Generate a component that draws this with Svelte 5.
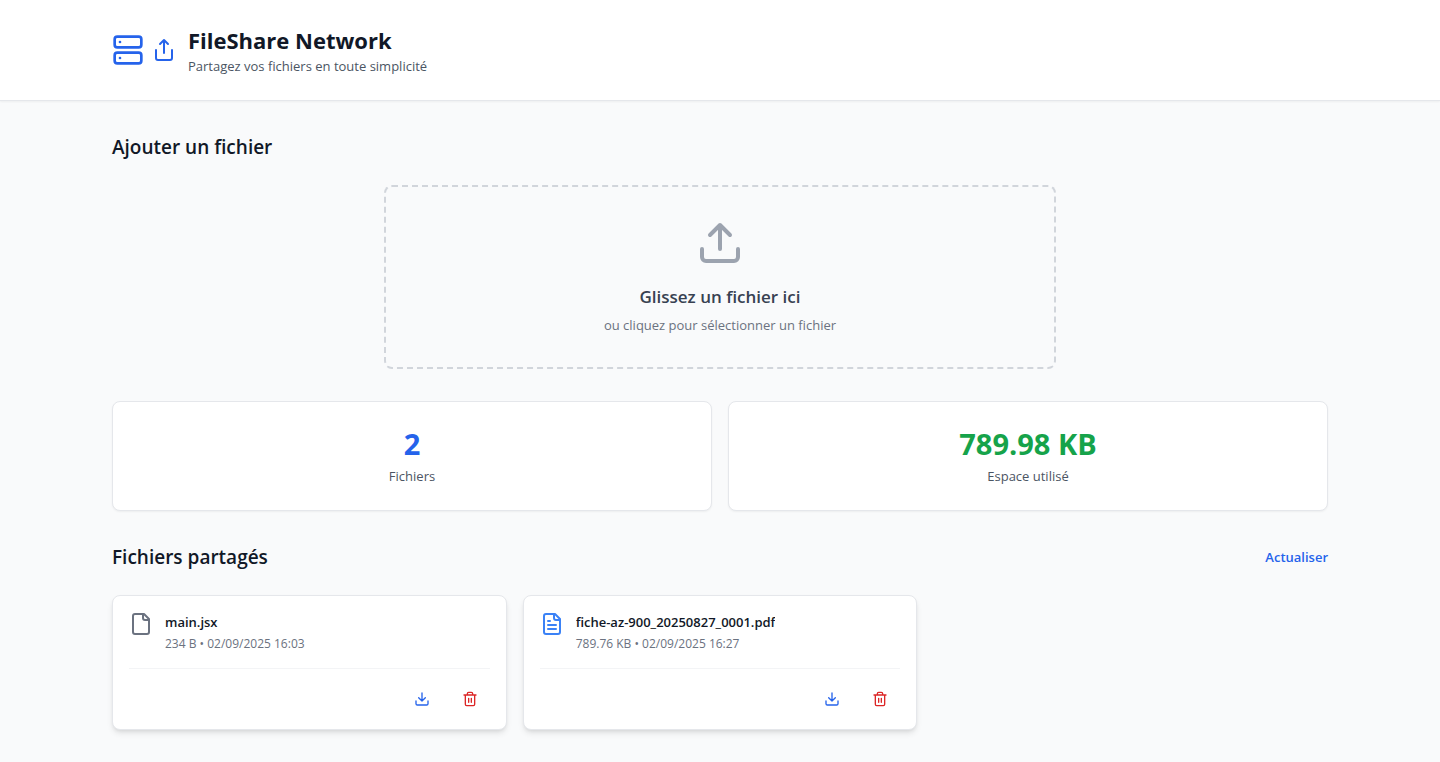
<script>
  const files = [
    { name: 'main.jsx', size: '234 B', date: '02/09/2025 16:03', kind: 'file' },
    { name: 'fiche-az-900_20250827_0001.pdf', size: '789.76 KB', date: '02/09/2025 16:27', kind: 'pdf' }
  ];
</script>

<div class="page">
  <header>
    <div class="container brand">
      <div class="logo">
        <svg class="icon server" viewBox="0 0 24 24" aria-hidden="true">
          <rect x="2" y="2" width="20" height="8" rx="2" />
          <rect x="2" y="14" width="20" height="8" rx="2" />
          <path d="M6 6h.01M6 18h.01" />
        </svg>
        <svg class="icon share" viewBox="0 0 24 24" aria-hidden="true">
          <path d="M4 12v8a2 2 0 0 0 2 2h12a2 2 0 0 0 2-2v-8" />
          <path d="m16 6-4-4-4 4M12 2v13" />
        </svg>
      </div>
      <div>
        <h1>FileShare Network</h1>
        <p class="small">Partagez vos fichiers en toute simplicité</p>
      </div>
    </div>
  </header>

  <main class="container">
    <section>
      <h2>Ajouter un fichier</h2>
      <button class="dropzone" type="button">
        <svg class="icon upload" viewBox="0 0 24 24" aria-hidden="true">
          <path d="M21 15v4a2 2 0 0 1-2 2H5a2 2 0 0 1-2-2v-4" />
          <path d="m17 8-5-5-5 5M12 3v12" />
        </svg>
        <span class="drop-title">Glissez un fichier ici</span>
        <span class="drop-hint">ou cliquez pour sélectionner un fichier</span>
      </button>
    </section>

    <section class="stats">
      <div class="stat">
        <p class="value blue">2</p>
        <p class="small">Fichiers</p>
      </div>
      <div class="stat">
        <p class="value green">789.98 KB</p>
        <p class="small">Espace utilisé</p>
      </div>
    </section>

    <section>
      <div class="list-head">
        <h2>Fichiers partagés</h2>
        <button class="refresh" type="button">Actualiser</button>
      </div>
      <div class="files">
        {#each files as file}
          <article>
            <div class="info">
              <svg class="icon file {file.kind}" viewBox="0 0 24 24" aria-hidden="true">
                <path d="M15 2H6a2 2 0 0 0-2 2v16a2 2 0 0 0 2 2h12a2 2 0 0 0 2-2V7Z" />
                <path d="M14 2v4a2 2 0 0 0 2 2h4" />
                {#if file.kind === 'pdf'}
                  <path d="M10 9H8M16 13H8M16 17H8" />
                {/if}
              </svg>
              <div class="details">
                <h3>{file.name}</h3>
                <p>{file.size} • {file.date}</p>
              </div>
            </div>
            <div class="actions">
              <button type="button" class="download" aria-label="Télécharger">
                <svg class="icon" viewBox="0 0 24 24" aria-hidden="true">
                  <path d="M21 15v4a2 2 0 0 1-2 2H5a2 2 0 0 1-2-2v-4" />
                  <path d="m7 10 5 5 5-5M12 15V3" />
                </svg>
              </button>
              <button type="button" class="delete" aria-label="Supprimer">
                <svg class="icon" viewBox="0 0 24 24" aria-hidden="true">
                  <path d="M3 6h18M19 6v14c0 1-1 2-2 2H7c-1 0-2-1-2-2V6M8 6V4c0-1 1-2 2-2h4c1 0 2 1 2 2v2M10 11v6M14 11v6" />
                </svg>
              </button>
            </div>
          </article>
        {/each}
      </div>
    </section>
  </main>
</div>

<style>
  :global(body) {
    margin: 0;
    background: #f9fafb;
  }
  .page {
    min-height: 100vh;
    background: #f9fafb;
    color: #111827;
    font-family: 'Segoe UI', 'Open Sans', 'Noto Sans', sans-serif;
    font-size: 16px;
    line-height: 24px;
  }
  .page * {
    box-sizing: border-box;
  }
  h1, h2, h3, p {
    margin: 0;
  }
  button {
    margin: 0;
    padding: 0;
    border: 0;
    background: none;
    color: inherit;
    font-family: inherit;
    cursor: pointer;
  }
  .icon {
    display: block;
    flex: none;
    width: 16px;
    height: 16px;
    fill: none;
    stroke: currentColor;
    stroke-width: 2;
    stroke-linecap: round;
    stroke-linejoin: round;
  }
  .container {
    max-width: 1280px;
    margin: 0 auto;
    padding: 0 32px;
  }
  header {
    background: #fff;
    border-bottom: 1px solid #e5e7eb;
    box-shadow: 0 1px 2px rgba(0, 0, 0, 0.05);
  }
  .brand {
    display: flex;
    align-items: center;
    gap: 12px;
    padding-top: 24px;
    padding-bottom: 24px;
  }
  .logo {
    display: flex;
    align-items: center;
    gap: 8px;
    color: #2563eb;
  }
  .server {
    width: 32px;
    height: 32px;
  }
  .share, .file {
    width: 24px;
    height: 24px;
  }
  h1 {
    font-size: 22px;
    font-weight: 700;
    line-height: 32px;
  }
  .small {
    color: #4b5563;
    font-size: 13px;
    line-height: 20px;
  }
  main {
    display: flex;
    flex-direction: column;
    gap: 32px;
  }
  main.container {
    padding-top: 32px;
    padding-bottom: 32px;
  }
  h2 {
    font-size: 19px;
    font-weight: 600;
    line-height: 28px;
  }
  .dropzone {
    display: flex;
    flex-direction: column;
    align-items: center;
    width: 100%;
    max-width: 672px;
    margin: 24px auto 0;
    padding: 32px;
    border: 2px dashed #d1d5db;
    border-radius: 8px;
  }
  .upload {
    width: 48px;
    height: 48px;
    margin-bottom: 16px;
    color: #9ca3af;
  }
  .drop-title {
    margin-bottom: 4px;
    color: #374151;
    font-size: 17px;
    font-weight: 600;
    line-height: 28px;
  }
  .drop-hint {
    color: #6b7280;
    font-size: 13px;
    line-height: 20px;
  }
  .stats {
    display: grid;
    grid-template-columns: repeat(2, 1fr);
    gap: 16px;
  }
  .stat {
    padding: 24px;
    border: 1px solid #e5e7eb;
    border-radius: 8px;
    background: #fff;
    box-shadow: 0 1px 2px rgba(0, 0, 0, 0.05);
    text-align: center;
  }
  .value {
    margin-bottom: 4px;
    font-size: 29px;
    font-weight: 700;
    line-height: 36px;
  }
  .blue {
    color: #2563eb;
  }
  .green {
    color: #16a34a;
  }
  .list-head {
    display: flex;
    align-items: center;
    justify-content: space-between;
    margin-bottom: 24px;
  }
  .refresh {
    color: #2563eb;
    font-size: 13px;
    font-weight: 600;
    line-height: 20px;
  }
  .files {
    display: grid;
    grid-template-columns: repeat(3, 1fr);
    gap: 16px;
  }
  article {
    padding: 16px;
    border: 1px solid #e5e7eb;
    border-radius: 8px;
    background: #fff;
    box-shadow: 0 4px 6px -1px rgba(0, 0, 0, 0.1), 0 2px 4px -2px rgba(0, 0, 0, 0.1);
  }
  .info {
    display: flex;
    align-items: flex-start;
    gap: 12px;
  }
  .file {
    color: #6b7280;
  }
  .pdf {
    color: #3b82f6;
  }
  .details {
    min-width: 0;
  }
  h3 {
    margin-bottom: 4px;
    overflow: hidden;
    font-size: 13px;
    font-weight: 600;
    line-height: 20px;
    text-overflow: ellipsis;
    white-space: nowrap;
  }
  .details p {
    color: #6b7280;
    font-size: 12px;
    line-height: 16px;
  }
  .actions {
    display: flex;
    justify-content: flex-end;
    gap: 8px;
    margin-top: 16px;
    padding-top: 16px;
    border-top: 1px solid #f3f4f6;
  }
  .actions button {
    padding: 6px 12px;
  }
  .download {
    color: #2563eb;
  }
  .delete {
    color: #dc2626;
  }
</style>
